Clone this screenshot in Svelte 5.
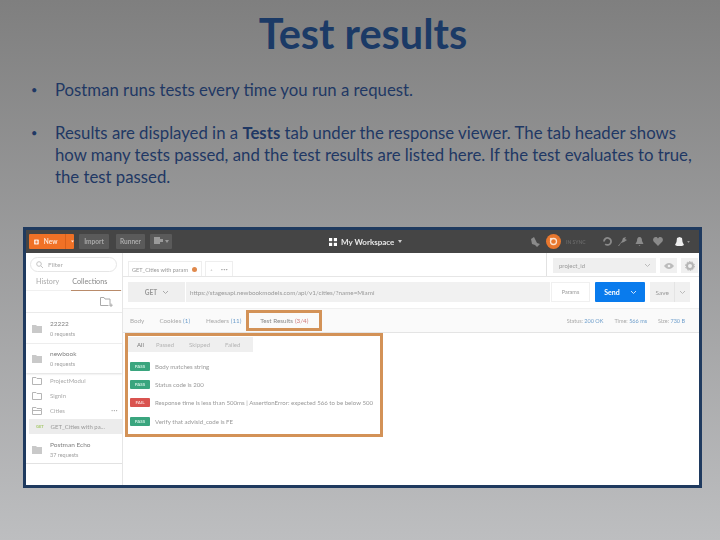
<script>
	const filters = ['All', 'Passed', 'Skipped', 'Failed'];
	const results = [
		{ status: 'PASS', text: 'Body matches string' },
		{ status: 'PASS', text: 'Status code is 200' },
		{ status: 'FAIL', text: 'Response time is less than 500ms | AssertionError: expected 566 to be below 500' },
		{ status: 'PASS', text: 'Verify that advisid_code is FE' }
	];
</script>

<div class="slide">
	<h1>Test results</h1>
	<ul class="bullets">
		<li>Postman runs tests every time you run a request.</li>
		<li>
			Results are displayed in a <b>Tests</b> tab under the response viewer. The tab header shows how many
			tests passed, and the test results are listed here. If the test evaluates to true, the test passed.
		</li>
	</ul>

	<div class="shot">
		<header class="topbar">
			<div class="new">
				<svg width="8" height="8" viewBox="0 0 8 8"><rect width="8" height="8" rx="1" fill="#fde5d6" /><path d="M4 1.5v5M1.5 4h5" stroke="#f26b21" stroke-width="1.2" /></svg>
				<span>New</span>
				<i class="sep"></i>
				<svg width="5" height="3" viewBox="0 0 5 3"><path d="M0 0h5L2.5 3z" fill="#fde5d6" /></svg>
			</div>
			<div class="btn import">Import</div>
			<div class="btn runner">Runner</div>
			<div class="btn icon">
				<svg width="9" height="9" viewBox="0 0 9 9"><path d="M0 0h6v2h3v3H6v2H0z" fill="#9a9a9a" /></svg>
				<svg width="4" height="3" viewBox="0 0 4 3"><path d="M0 0h4L2 3z" fill="#999" /></svg>
			</div>
			<div class="workspace">
				<svg width="8" height="8" viewBox="0 0 8 8" fill="#fff"><rect width="3.2" height="3.2" /><rect x="4.8" width="3.2" height="3.2" /><rect y="4.8" width="3.2" height="3.2" /><rect x="4.8" y="4.8" width="3.2" height="3.2" /></svg>
				<span>My Workspace</span>
				<svg width="4" height="3" viewBox="0 0 4 3"><path d="M0 0h4L2 3z" fill="#ccc" /></svg>
			</div>
			<div class="tools">
				<svg class="sat" width="10" height="10" viewBox="0 0 10 10"><path d="M1 2l3-2 3 6 3 1-3 3-2-2-3-1z" fill="#8a8a8a" /></svg>
				<div class="sync"><svg width="15" height="15" viewBox="0 0 15 15"><circle cx="7.5" cy="7.5" r="7.5" fill="#e8772e" /><circle cx="7.5" cy="7.5" r="3" fill="none" stroke="#fbe3d0" stroke-width="1.3" /><circle cx="5" cy="5" r="1.2" fill="#fbe3d0" /></svg></div>
				<span class="syncing">IN SYNC</span>
				<svg class="t1" width="9" height="9" viewBox="0 0 9 9"><path d="M1 4.5a3.5 3.5 0 1 1 1.2 2.6" fill="none" stroke="#8a8a8a" stroke-width="1.8" /></svg>
				<svg class="t2" width="9" height="9" viewBox="0 0 9 9"><path d="M0 9l4-5 1-3 3-1-1 2 2 1-3 2-3 1-2 3z" fill="#8a8a8a" /></svg>
				<svg class="t3" width="9" height="9" viewBox="0 0 9 9"><path d="M4.5 0c2 0 2.5 2 2.5 4l1.5 3h-8L2 4c0-2 .5-4 2.5-4zM3.5 8h2l-1 1z" fill="#8a8a8a" /></svg>
				<svg class="t4" width="10" height="9" viewBox="0 0 10 9"><path d="M5 9L.6 4.5C-.8 2.5.8 0 2.8 0 4 0 4.600 .7 5 1.400 5.400 .7 6 0 7.200 0c2 0 3.600 2.500 2.200 4.500z" fill="#8a8a8a" /></svg>
				<svg class="t5" width="9" height="10" viewBox="0 0 9 10"><path d="M2 1l2.500-1L7 1l.5 4 1.500 3-2 1H2L0 8l1.500-3z" fill="#eee" /></svg>
				<svg width="3" height="2" viewBox="0 0 4 3"><path d="M0 0h4L2 3z" fill="#999" /></svg>
			</div>
		</header>

		<div class="body">
			<aside class="sidebar">
				<div class="filter">
					<svg width="7" height="7" viewBox="0 0 7 7"><circle cx="3" cy="3" r="2.300" fill="none" stroke="#c4c4c4" /><path d="M4.700 4.700L7 7" stroke="#c4c4c4" /></svg>
					<span>Filter</span>
				</div>
				<div class="sidetabs">
					<span class="history">History</span>
					<span class="collections">Collections</span>
				</div>
				<div class="newfolder">
					<svg width="13" height="10" viewBox="0 0 13 10"><path d="M10 7.500V2H5L4 .5H.5v8h8" fill="none" stroke="#aaa" /><path d="M11 6.500v3.500M9.200 8.200h3.500" stroke="#aaa" /></svg>
				</div>
				<div class="coll top">
					<svg class="fold" width="10" height="8" viewBox="0 0 10 8"><path d="M0 0h4l1 1h5v7H0z" fill="#c9c9c9" /></svg>
					<div><div class="cname">22222</div><div class="csub">0 requests</div></div>
				</div>
				<div class="coll shadowed">
					<svg class="fold" width="10" height="8" viewBox="0 0 10 8"><path d="M0 0h4l1 1h5v7H0z" fill="#c9c9c9" /></svg>
					<div><div class="cname">newbook</div><div class="csub">0 requests</div></div>
				</div>
				<div class="sub">
					<svg width="10" height="8" viewBox="0 0 10 8"><path d="M.5.5h3.500l1 1h4.500v6H.5z" fill="none" stroke="#b5b5b5" /></svg>
					<span>ProjectModul</span>
				</div>
				<div class="sub">
					<svg width="10" height="8" viewBox="0 0 10 8"><path d="M.5.5h3.500l1 1h4.500v6H.5z" fill="none" stroke="#b5b5b5" /></svg>
					<span>SignIn</span>
				</div>
				<div class="sub">
					<svg width="10" height="8" viewBox="0 0 10 8"><path d="M.5 7.500V.5h3.500l1 1h4.500v2M.5 3.500h9v4h-9" fill="none" stroke="#b5b5b5" /></svg>
					<span>Cities</span>
					<em>•••</em>
				</div>
				<div class="req"><b>GET</b><span>GET_Cities with pa...</span></div>
				<div class="coll echo">
					<svg class="fold" width="10" height="8" viewBox="0 0 10 8"><path d="M0 0h4l1 1h5v7H0z" fill="#c9c9c9" /></svg>
					<div><div class="cname">Postman Echo</div><div class="csub">37 requests</div></div>
				</div>
			</aside>

			<main class="main">
				<div class="tabrow">
					<div class="reqtab"><span>GET_Cities with param</span><i></i></div>
					<div class="plus"><span>+</span><span>•••</span></div>
					<div class="env">
						<div class="select"><span>project_id</span><svg width="5" height="3" viewBox="0 0 5 3"><path d="M0 0l2.500 2.500L5 0" fill="none" stroke="#bbb" /></svg></div>
						<div class="square"><svg width="10" height="6" viewBox="0 0 10 6"><path d="M0 3c3-4 7-4 10 0-3 4-7 4-10 0z" fill="#bbb" /><circle cx="5" cy="3" r="1.300" fill="#f0f0f0" /></svg></div>
						<div class="square"><svg width="10" height="10" viewBox="0 0 10 10"><circle cx="5" cy="5" r="3" fill="none" stroke="#b5b5b5" stroke-width="2" /><circle cx="5" cy="5" r="4.500" fill="none" stroke="#b5b5b5" stroke-dasharray="1.500 1.300" /></svg></div>
					</div>
				</div>
				<div class="urlrow">
					<div class="method">GET<svg width="5" height="3" viewBox="0 0 5 3"><path d="M0 0l2.500 2.500L5 0" fill="none" stroke="#aaa" /></svg></div>
					<div class="url">https://stagesapi.newbookmodels.com/api/v1/cities/?name=Miami</div>
					<div class="params">Params</div>
					<div class="send"><span>Send</span><svg width="5" height="3" viewBox="0 0 5 3"><path d="M0 0l2.500 2.500L5 0" fill="none" stroke="#cfe4fb" /></svg></div>
					<div class="save"><span>Save</span><i><svg width="5" height="3" viewBox="0 0 5 3"><path d="M0 0l2.500 2.500L5 0" fill="none" stroke="#bbb" /></svg></i></div>
				</div>
				<div class="restabs">
					<span class="rt body-tab">Body</span>
					<span class="rt">Cookies <u>(1)</u></span>
					<span class="rt headers">Headers <u>(11)</u></span>
					<span class="active">Test Results <s>(3/4)</s></span>
					<div class="stats">
						<span>Status: <u>200 OK</u></span>
						<span>Time: <u>566 ms</u></span>
						<span>Size: <u>730 B</u></span>
					</div>
				</div>
				<section class="results">
					<div class="filters">
						{#each filters as f, i}
							<span class:on={i === 0}>{f}</span>
						{/each}
					</div>
					{#each results as r}
						<div class="row">
							<span class="badge" class:fail={r.status === 'FAIL'}>{r.status}</span>
							<span>{r.text}</span>
						</div>
					{/each}
				</section>
			</main>
		</div>
	</div>
</div>

<style>
	:global(body) {
		margin: 0;
	}

	.slide {
		width: 720px;
		height: 540px;
		overflow: hidden;
		background: linear-gradient(#7f7f7f, #bdbec0);
		font-family: Lato, sans-serif;
		box-sizing: border-box;
		padding-top: 10px;
	}

	h1 {
		margin: 0;
		padding-left: 6px;
		text-align: center;
		color: #1b3a66;
		font-size: 41.500px;
		line-height: 46px;
		font-weight: 700;
	}

	.bullets {
		list-style: none;
		margin: 23px 0 0;
		padding: 0 23px 0 55px;
		color: #1f3864;
		font-size: 16.750px;
		line-height: 22px;
	}

	.bullets li {
		position: relative;
		margin-bottom: 21px;
	}

	.bullets li::before {
		content: '•';
		position: absolute;
		left: -24px;
		font-size: 11px;
	}

	.shot {
		width: 679px;
		height: 261px;
		margin: 39px 0 0 23px;
		box-sizing: border-box;
		border: 3px solid #1f3a5f;
		background: #fff;
		display: flex;
		flex-direction: column;
		overflow: hidden;
		font-size: 6px;
		color: #888;
		filter: blur(0.3px);
	}

	.topbar {
		height: 23px;
		flex: none;
		background: #454545;
		display: flex;
		align-items: center;
		padding-left: 3px;
		color: #aaa;
		font-size: 6.5px;
		font-weight: 700;
	}

	.new {
		width: 45px;
		height: 15px;
		background: #f07126;
		border-radius: 1px;
		color: #fde5d6;
		display: flex;
		align-items: center;
		padding-left: 5px;
		box-sizing: border-box;
		gap: 5px;
	}

	.new .sep {
		width: 1px;
		height: 15px;
		margin-left: 3px;
		background: #d9601c;
	}

	.btn {
		height: 15px;
		background: #5a5a5a;
		border-radius: 1px;
		display: flex;
		align-items: center;
		justify-content: center;
		gap: 2px;
	}

	.import {
		width: 30px;
		margin-left: 5px;
	}

	.runner {
		width: 29px;
		margin-left: 7px;
	}

	.btn.icon {
		width: 22px;
		margin-left: 5px;
	}

	.workspace {
		margin-left: 157px;
		display: flex;
		align-items: center;
		gap: 4px;
		color: #e8e8e8;
		font-size: 8px;
	}

	.tools {
		margin-left: auto;
		display: flex;
		align-items: center;
		padding-right: 9px;
		color: #666;
	}

	.sync {
		display: flex;
		margin-left: 6px;
	}

	.syncing {
		margin: 0 18px 0 5px;
		width: 19px;
		font-size: 5px;
		white-space: nowrap;
	}

	.t2 {
		margin-left: 6px;
	}

	.t3 {
		margin-left: 8px;
	}

	.t4 {
		margin-left: 9px;
	}

	.t5 {
		margin: 0 3px 0 12px;
	}

	.body {
		flex: 1;
		display: flex;
		min-height: 0;
	}

	.sidebar {
		width: 97px;
		flex: none;
		box-sizing: border-box;
		border-right: 1px solid #e6e6e6;
		color: #888;
	}

	.filter {
		height: 15px;
		margin: 4px 5px 0 4px;
		border: 1px solid #e6e6e6;
		border-radius: 8px;
		box-sizing: border-box;
		display: flex;
		align-items: center;
		gap: 5px;
		padding-left: 5px;
		font-size: 6.500px;
		color: #aaa;
	}

	.sidetabs {
		display: flex;
		height: 19px;
		align-items: center;
		font-size: 7.200px;
		color: #aaa;
		border-bottom: 1px solid #f0f0f0;
		box-sizing: border-box;
	}

	.history {
		margin-left: 10px;
	}

	.collections {
		margin-left: 12px;
		padding-left: 1px;
		height: 19px;
		line-height: 19px;
		box-sizing: border-box;
		width: 50px;
		border-bottom: 1px solid #b98b6a;
		color: #888;
		white-space: nowrap;
	}

	.newfolder {
		height: 22px;
		display: flex;
		justify-content: flex-end;
		align-items: center;
		padding-right: 9px;
		box-sizing: border-box;
		border-bottom: 1px solid #eaeaea;
	}

	.coll {
		height: 31px;
		display: flex;
		align-items: center;
		gap: 8px;
		padding: 2px 0 0 6px;
		box-sizing: border-box;
		border-bottom: 1px solid #eee;
	}

	.coll.shadowed {
		height: 29px;
		padding-top: 1px;
		box-shadow: 0 1px 2px #ddd;
		border-bottom: 0;
	}

	.coll.echo {
		height: 30px;
		border-bottom: 1px solid #e2e2e2;
	}

	.cname {
		font-size: 6.500px;
		color: #808080;
		line-height: 10px;
	}

	.csub {
		font-size: 5.500px;
		color: #a0a0a0;
		line-height: 10px;
	}

	.sub {
		height: 15px;
		display: flex;
		align-items: center;
		gap: 8px;
		padding-left: 6px;
		font-size: 6px;
		color: #aaa;
		position: relative;
	}

	.sub em {
		position: absolute;
		right: 4px;
		font-style: normal;
		font-size: 3px;
		letter-spacing: 0.5px;
		color: #aaa;
	}

	.req {
		height: 15px;
		margin: 1px 0 0 3px;
		background: #ececec;
		display: flex;
		align-items: center;
		gap: 7px;
		padding-left: 7px;
		font-size: 6px;
		color: #999;
	}

	.req b {
		color: #a5c86a;
		font-size: 4px;
	}

	.main {
		flex: 1;
		min-width: 0;
		display: flex;
		flex-direction: column;
	}

	.tabrow {
		height: 24px;
		flex: none;
		display: flex;
		align-items: flex-end;
		border-bottom: 1px solid #e6e6e6;
		box-sizing: border-box;
		padding-left: 5px;
	}

	.reqtab {
		width: 74px;
		height: 15px;
		box-sizing: border-box;
		border: 1px solid #eee;
		border-bottom: 0;
		display: flex;
		align-items: center;
		gap: 4px;
		padding-left: 3px;
		color: #999;
		font-size: 5.600px;
		white-space: nowrap;
	}

	.reqtab i {
		width: 5px;
		height: 5px;
		flex: none;
		border-radius: 50%;
		background: #e0894c;
	}

	.plus {
		margin-left: 3px;
		width: 28px;
		height: 15px;
		box-sizing: border-box;
		border: 1px solid #eee;
		border-bottom: 0;
		display: flex;
		justify-content: space-around;
		align-items: center;
		color: #aaa;
		font-size: 4px;
	}

	.env {
		margin-left: auto;
		align-self: stretch;
		width: 153px;
		box-sizing: border-box;
		border-left: 1px solid #e2e2e2;
		display: flex;
		align-items: flex-start;
		gap: 4px;
		padding: 5px 0 0 6px;
	}

	.select {
		width: 103px;
		height: 15px;
		background: #efefef;
		display: flex;
		align-items: center;
		justify-content: space-between;
		box-sizing: border-box;
		padding: 0 6px;
		color: #999;
		font-size: 6px;
	}

	.square {
		width: 17px;
		height: 15px;
		background: #f0f0f0;
		display: flex;
		align-items: center;
		justify-content: center;
	}

	.urlrow {
		height: 31px;
		flex: none;
		display: flex;
		padding: 5px 0 0 5px;
		box-sizing: border-box;
		color: #999;
	}

	.urlrow > div {
		height: 20px;
		display: flex;
		align-items: center;
	}

	.method {
		width: 57px;
		background: #efefef;
		justify-content: center;
		gap: 6px;
		font-size: 6.500px;
		font-weight: 700;
	}

	.url {
		width: 364px;
		margin-left: 1px;
		padding-left: 4px;
		box-sizing: border-box;
		background: #f1f1f1;
		font-size: 6.300px;
		white-space: nowrap;
		overflow: hidden;
	}

	.params {
		width: 39px;
		margin-left: 1px;
		justify-content: center;
		font-size: 5.500px;
		border: 1px solid #f0f0f0;
		box-sizing: border-box;
	}

	.send {
		width: 50px;
		margin-left: 5px;
		background: #097bed;
		border-radius: 1px;
		color: #fff;
		font-weight: 700;
		font-size: 7px;
		justify-content: center;
		gap: 11px;
	}

	.save {
		width: 40px;
		margin-left: 5px;
		background: #f0f0f0;
		font-size: 6.500px;
		color: #999;
	}

	.save span {
		width: 25px;
		text-align: center;
	}

	.save i {
		width: 15px;
		height: 20px;
		display: flex;
		align-items: center;
		justify-content: center;
		border-left: 1px solid #e4e4e4;
	}

	.restabs {
		height: 25px;
		flex: none;
		background: #fafafa;
		border-top: 1px solid #f0f0f0;
		border-bottom: 1px solid #e4e4e4;
		box-sizing: border-box;
		display: flex;
		align-items: center;
		font-size: 6.300px;
		color: #aaa;
	}

	.restabs u,
	.stats u {
		text-decoration: none;
		color: #6f9fcc;
	}

	.rt {
		margin-left: 7px;
	}

	.rt + .rt {
		margin-left: 15px;
	}

	.rt.headers {
		margin-left: 16px;
	}

	.active {
		margin-left: 5px;
		box-sizing: border-box;
		width: 76px;
		height: 21px;
		border: 3px solid #d39257;
		display: flex;
		align-items: center;
		justify-content: center;
		gap: 2px;
		color: #888;
		white-space: nowrap;
	}

	.active s {
		text-decoration: none;
		color: #d07a7a;
	}

	.stats {
		margin-left: auto;
		padding-right: 14px;
		display: flex;
		gap: 11px;
		font-size: 5.500px;
	}

	.results {
		width: 258px;
		height: 104px;
		margin-left: 2px;
		box-sizing: border-box;
		border: 3px solid #d39257;
		padding-top: 1px;
	}

	.filters {
		width: 125px;
		height: 15px;
		background: #efefef;
		display: flex;
		align-items: center;
		gap: 15px;
		padding-left: 9px;
		box-sizing: border-box;
		color: #b5b5b5;
		font-size: 6px;
	}

	.filters span.on {
		margin-right: -3px;
		color: #777;
	}

	.row {
		height: 18.300px;
		display: flex;
		align-items: center;
		gap: 5px;
		padding-left: 2px;
		font-size: 6.100px;
		color: #999;
		white-space: nowrap;
	}

	.row:nth-child(2) {
		margin-top: 5px;
	}

	.badge {
		width: 20px;
		height: 9px;
		flex: none;
		border-radius: 1px;
		background: #3aa57e;
		color: #c7ecdc;
		font-size: 4.500px;
		font-weight: 700;
		display: flex;
		align-items: center;
		justify-content: center;
	}

	.badge.fail {
		background: #d9534f;
		color: #f8d4d2;
	}
</style>
